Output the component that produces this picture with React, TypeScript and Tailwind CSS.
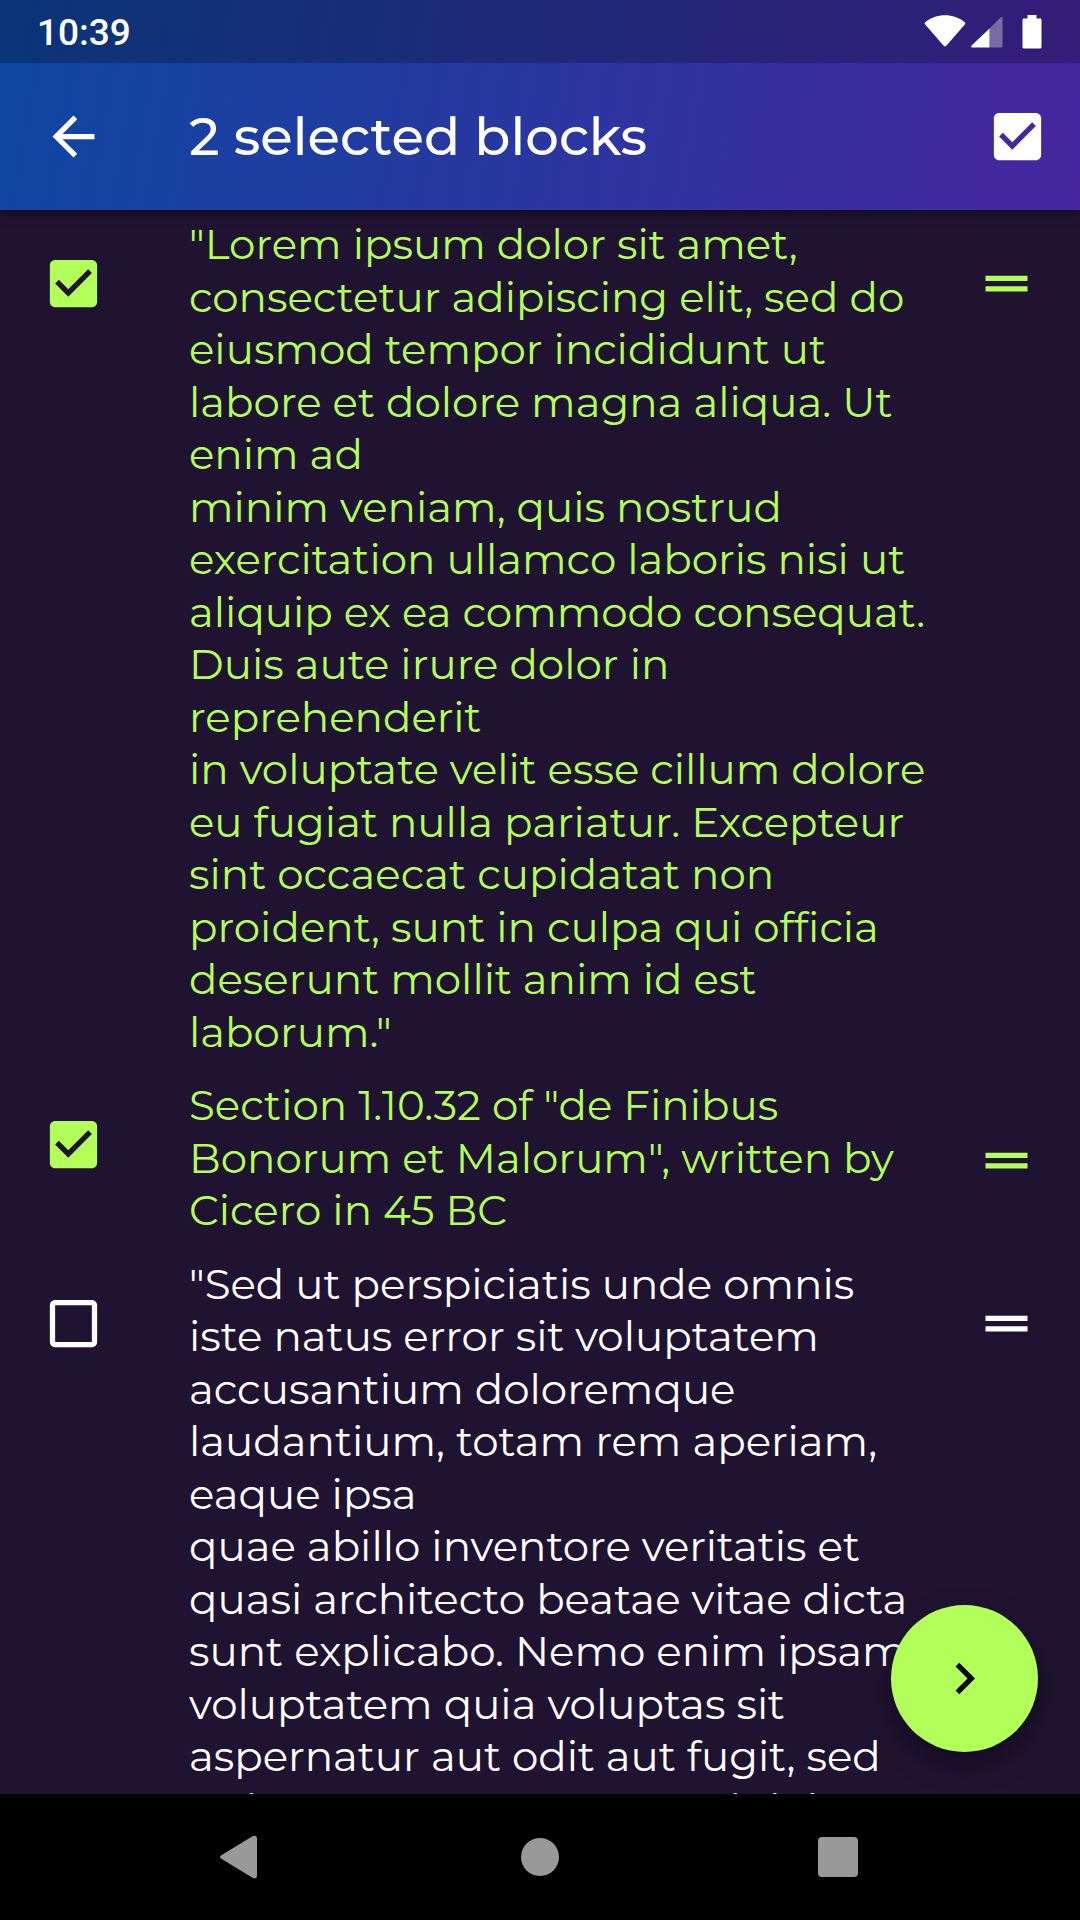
import { useState } from "react";

const blocks = [
  {
    id: "lorem",
    selected: true,
    centerHandle: false,
    lines: [
      '"Lorem ipsum dolor sit amet,',
      "consectetur adipiscing elit, sed do",
      "eiusmod tempor incididunt ut",
      "labore et dolore magna aliqua. Ut",
      "enim ad",
      "minim veniam, quis nostrud",
      "exercitation ullamco laboris nisi ut",
      "aliquip ex ea commodo consequat.",
      "Duis aute irure dolor in",
      "reprehenderit",
      "in voluptate velit esse cillum dolore",
      "eu fugiat nulla pariatur. Excepteur",
      "sint occaecat cupidatat non",
      "proident, sunt in culpa qui officia",
      "deserunt mollit anim id est",
      'laborum."',
    ],
  },
  {
    id: "section",
    selected: true,
    centerHandle: true,
    lines: [
      'Section 1.10.32 of "de Finibus',
      'Bonorum et Malorum", written by',
      "Cicero in 45 BC",
    ],
  },
  {
    id: "perspiciatis",
    selected: false,
    centerHandle: false,
    lines: [
      '"Sed ut perspiciatis unde omnis',
      "iste natus error sit voluptatem",
      "accusantium doloremque",
      "laudantium, totam rem aperiam,",
      "eaque ipsa",
      "quae abillo inventore veritatis et",
      "quasi architecto beatae vitae dicta",
      "sunt explicabo. Nemo enim ipsam",
      "voluptatem quia voluptas sit",
      "aspernatur aut odit aut fugit, sed",
      "quia consequuntur magni dolores",
    ],
  },
];

type CheckBoxProps = {
  id: string;
  label?: string;
  checked: boolean;
  onChange: () => void;
};

function CheckBox({ id, label, checked, onChange }: CheckBoxProps) {
  return (
    <span className="relative block size-[63px] shrink-0">
      <input
        id={id}
        type="checkbox"
        aria-label={label}
        checked={checked}
        onChange={onChange}
        className="absolute inset-0 size-full cursor-pointer appearance-none"
      />
      <svg viewBox="0 0 24 24" fill="currentColor" aria-hidden="true" className="pointer-events-none relative size-full">
        {checked ? (
          <path d="M19 3H5c-1.11 0-2 .9-2 2v14c0 1.1.89 2 2 2h14c1.11 0 2-.9 2-2V5c0-1.1-.89-2-2-2zm-9 14l-5-5 1.41-1.41L10 14.17l7.59-7.59L19 8l-9 9z" />
        ) : (
          <path d="M19 5v14H5V5h14m0-2H5c-1.1 0-2 .9-2 2v14c0 1.1.9 2 2 2h14c1.1 0 2-.9 2-2V5c0-1.1-.9-2-2-2z" />
        )}
      </svg>
    </span>
  );
}

function StatusBar() {
  return (
    <div className="flex h-[63px] items-center justify-between bg-black/25 pr-[38px] pl-[37px]">
      <time className="pt-[2px] font-['Roboto',sans-serif] text-[37px] leading-none font-medium">10:39</time>
      <div className="flex items-center">
        <svg viewBox="0 0 42 34" fill="currentColor" aria-hidden="true" className="h-[34px] w-[42px]">
          <path d="M1.200 9.400C.4 8.600.5 7.700 1.300 7.200 7 2.500 13.700.3 21 .3s14 2.200 19.700 6.900c.8.5.9 1.400.1 2.200L22.300 30.700c-.8 1-1.800 1-2.600 0z" />
        </svg>
        <svg viewBox="0 0 32 34" fill="currentColor" aria-hidden="true" className="ml-[5px] h-[34px] w-[32px]">
          <path opacity=".35" d="M18.500 13.500 29.500 2.500c1-1 2-.5 2 .8V31c0 .9-.6 1.500-1.500 1.500H18.500z" />
          <path d="M18.500 13.500V32.500H1.500C.2 32.500-.3 31.400.6 30.400z" />
        </svg>
        <svg viewBox="0 0 20 34" fill="currentColor" aria-hidden="true" className="ml-[19px] h-[34px] w-[20px]">
          <path d="M5.500 0h9v3.500h3.500c1 0 1.500.6 1.500 1.500v27c0 .9-.6 1.500-1.500 1.500H2c-.9 0-1.500-.6-1.500-1.500V5c0-.9.5-1.500 1.500-1.500h3.500z" />
        </svg>
      </div>
    </div>
  );
}

export default function App() {
  const [selected, setSelected] = useState<Record<string, boolean>>(
    Object.fromEntries(blocks.map((b) => [b.id, b.selected])),
  );
  const count = Object.values(selected).filter(Boolean).length;
  const selectAll = () => {
    const next = count < blocks.length;
    setSelected(Object.fromEntries(blocks.map((b) => [b.id, next])));
  };

  return (
    <div className="flex h-screen flex-col overflow-hidden bg-[#201332] font-['Montserrat','Inter',sans-serif] text-white [font-variant-ligatures:none]">
      <header className="z-10 shrink-0 bg-[linear-gradient(100deg,#0d47a1,#4726a0)] shadow-[0_2px_10px_rgba(0,0,0,0.5)]">
        <StatusBar />
        <div className="flex h-[147px] items-center pr-[31px] pl-[42px]">
          <button type="button" aria-label="Back" className="shrink-0">
            <svg viewBox="0 0 24 24" fill="currentColor" className="size-[63px]">
              <path d="M20 11H7.830l5.590-5.590L12 4l-8 8 8 8 1.410-1.410L7.830 13H20v-2z" />
            </svg>
          </button>
          <h1 className="ml-[84px] flex-1 text-[53px] leading-tight font-medium">{count} selected blocks</h1>
          <CheckBox id="select-all" label="Select all blocks" checked={count > 0} onChange={selectAll} />
        </div>
      </header>

      <main className="relative min-h-0 flex-1">
        <ul className="h-full overflow-hidden">
          {blocks.map((block) => (
            <li
              key={block.id}
              className={`flex items-start pr-[42px] pl-[42px] ${selected[block.id] ? "text-[#b2ff59]" : "text-white"}`}
            >
              <div className="pt-[42px]">
                <CheckBox
                  id={block.id}
                  checked={selected[block.id]}
                  onChange={() => setSelected({ ...selected, [block.id]: !selected[block.id] })}
                />
              </div>
              <label
                htmlFor={block.id}
                className="ml-[84px] min-w-0 flex-1 pt-[8px] pb-[13px] text-[42px] leading-tight whitespace-pre"
              >
                {block.lines.join("\n")}
              </label>
              <button
                type="button"
                aria-label="Reorder block"
                className={`shrink-0 cursor-grab ${block.centerHandle ? "self-center" : "mt-[42px]"}`}
              >
                <svg viewBox="0 0 24 24" fill="currentColor" className="size-[63px]">
                  <path d="M20 9H4v2h16V9zM4 15h16v-2H4v2z" />
                </svg>
              </button>
            </li>
          ))}
        </ul>

        <button
          type="button"
          aria-label="Next"
          className="absolute right-[42px] bottom-[42px] grid size-[147px] place-items-center rounded-full bg-[#b2ff59] text-black shadow-[0_12px_28px_rgba(0,0,0,0.4)]"
        >
          <svg viewBox="0 0 24 24" fill="currentColor" className="size-[63px]">
            <path d="M10 6L8.590 7.410 13.170 12l-4.580 4.590L10 18l6-6z" />
          </svg>
        </button>
      </main>

      <nav className="flex h-[126px] shrink-0 bg-black px-[93px] text-[#999999]">
        <button type="button" aria-label="System back" className="grid flex-1 place-items-center">
          <svg viewBox="0 0 44 44" fill="currentColor" className="size-[44px]">
            <path d="M1.300 20.300 32.500 1.200C35 0 37 .8 37 3.200v37.600c0 2.400-2 3.200-4.500 2L1.300 23.700c-1.700-1-1.700-2.400 0-3.400z" />
          </svg>
        </button>
        <button type="button" aria-label="Home" className="grid flex-1 place-items-center">
          <span className="size-[38px] rounded-full bg-current" />
        </button>
        <button type="button" aria-label="Recent apps" className="grid flex-1 place-items-center">
          <span className="size-[40px] rounded-[4px] bg-current" />
        </button>
      </nav>
    </div>
  );
}
